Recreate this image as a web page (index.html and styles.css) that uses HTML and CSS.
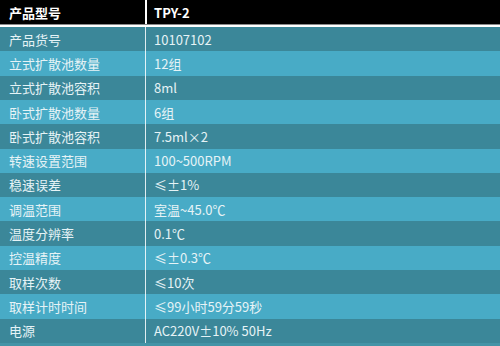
FILE: index.html
```html
<!DOCTYPE html>
<html lang="zh">
<head>
<meta charset="utf-8">
<link rel="stylesheet" href="styles.css">
</head>
<body>
<div class="spec">
  <div class="head">
    <div class="cell c1">产品型号</div>
    <div class="cell c2">TPY-2</div>
  </div>
  <div class="rows">
    <div class="row dark"><div class="cell c1">产品货号</div><div class="cell c2">10107102</div></div>
    <div class="row light"><div class="cell c1">立式扩散池数量</div><div class="cell c2">12组</div></div>
    <div class="row dark"><div class="cell c1">立式扩散池容积</div><div class="cell c2">8ml</div></div>
    <div class="row light"><div class="cell c1">卧式扩散池数量</div><div class="cell c2">6组</div></div>
    <div class="row dark"><div class="cell c1">卧式扩散池容积</div><div class="cell c2">7.5ml×2</div></div>
    <div class="row light"><div class="cell c1">转速设置范围</div><div class="cell c2">100~500RPM</div></div>
    <div class="row dark"><div class="cell c1">稳速误差</div><div class="cell c2">≤±1%</div></div>
    <div class="row light"><div class="cell c1">调温范围</div><div class="cell c2">室温~45.0℃</div></div>
    <div class="row dark"><div class="cell c1">温度分辨率</div><div class="cell c2">0.1℃</div></div>
    <div class="row light"><div class="cell c1">控温精度</div><div class="cell c2">≤±0.3℃</div></div>
    <div class="row dark"><div class="cell c1">取样次数</div><div class="cell c2">≤10次</div></div>
    <div class="row light"><div class="cell c1">取样计时时间</div><div class="cell c2">≤99小时59分59秒</div></div>
    <div class="row dark"><div class="cell c1">电源</div><div class="cell c2">AC220V±10% 50Hz</div></div>
  </div>
</div>
</body>
</html>
```

FILE: styles.css
```css
html, body {
  margin: 0;
  padding: 0;
  background: #ffffff;
}
.spec {
  width: 500px;
  height: 346px;
  display: flex;
  flex-direction: column;
  font-family: "Noto Sans CJK SC", "Noto Sans", sans-serif;
  font-size: 13px;
  color: #e6f3f6;
  background: #4394a7;
}
.head {
  height: 24px;
  display: grid;
  grid-template-columns: 145px 1fr;
  background: #000000;
  color: #ffffff;
  font-weight: 700;
  border-bottom: 1px solid #8a8a8a;
}
.head .c2 {
  border-left: 2px solid #ffffff;
  padding-left: 7px;
}
.rows {
  height: 316px;
  border-top: 2px solid #ffffff;
  display: grid;
  grid-template-rows: repeat(13, 1fr);
}
.row {
  display: grid;
  grid-template-columns: 145px 1fr;
}
.cell {
  display: flex;
  align-items: center;
  white-space: nowrap;
}
.c1 {
  padding-left: 9px;
}
.c2 {
  padding-left: 8px;
  border-left: 1px solid rgba(255, 255, 255, 0.85);
}
.dark {
  background: #3b8799;
}
.light {
  background: #48abc6;
}
```
